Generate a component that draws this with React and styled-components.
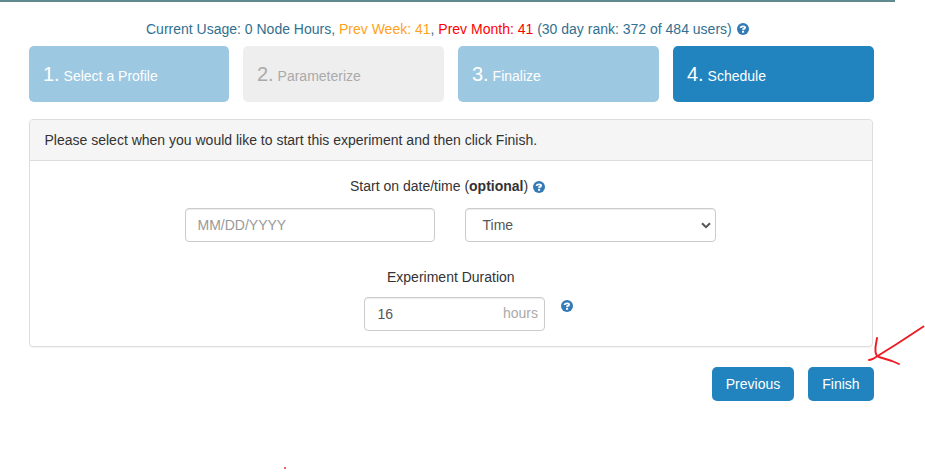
import React from "react";
import styled, { createGlobalStyle } from "styled-components";

const GlobalStyle = createGlobalStyle`
  *, *::before, *::after { box-sizing: border-box; }
  body {
    margin: 0;
    background: #fff;
    color: #333;
    font: 14px/20px "Liberation Sans", Arial, sans-serif;
    overflow: hidden;
  }
`;

const Page = styled.div`
  position: relative;
  width: 925px;
  height: 473px;
`;

const TopRule = styled.div`
  width: 895px;
  height: 2px;
  background: #5f8a8f;
`;

const Content = styled.main`
  width: 845px;
  margin-left: 29px;
  padding-top: 17px;
`;

const Usage = styled.div`
  display: flex;
  align-items: center;
  height: 20px;
  padding-left: 117px;
  white-space: pre;
  color: #31708f;
`;

const Amount = styled.span`
  color: ${(p) => p.$color};
`;

const HelpSvg = styled.svg`
  display: block;
  flex: none;
  width: 12px;
  height: 12px;
  margin: ${(p) => p.$margin || "0"};
`;

const Steps = styled.nav`
  display: grid;
  grid-template-columns: 200px 201px 201px 201px;
  column-gap: 14px;
  margin-top: 7px;
`;

const stepColors = {
  done: ["#9dc8e2", "#fff"],
  disabled: ["#eeeeee", "#aaa"],
  active: ["#2184be", "#fff"],
};

const Step = styled.div`
  height: 56px;
  padding: 14px;
  border-radius: 5px;
  white-space: pre;
  background: ${(p) => stepColors[p.$state][0]};
  color: ${(p) => stepColors[p.$state][1]};
`;

const StepNumber = styled.span`
  font-size: 20px;
  line-height: 28px;
`;

const Panel = styled.section`
  width: 844px;
  height: 228px;
  margin-top: 17px;
  border: 1px solid #ddd;
  border-radius: 4px;
  box-shadow: 0 1px 1px rgba(0, 0, 0, 0.05);
`;

const PanelHeading = styled.header`
  height: 41px;
  padding: 10px 14.5px;
  border-bottom: 1px solid #ddd;
  border-radius: 3px 3px 0 0;
  background: #f5f5f5;
`;

const FieldLabel = styled.div`
  display: flex;
  align-items: center;
  height: 20px;
  margin-top: ${(p) => p.$top}px;
  padding-left: ${(p) => p.$left}px;
  white-space: pre;
`;

const FieldRow = styled.div`
  display: flex;
  gap: ${(p) => p.$gap}px;
  margin-top: ${(p) => p.$top}px;
  padding-left: ${(p) => p.$left}px;
`;

const Control = styled.div`
  display: flex;
  align-items: center;
  justify-content: space-between;
  width: ${(p) => p.$width}px;
  height: 34px;
  padding: ${(p) => p.$padding || "0 12px"};
  border: 1px solid #ccc;
  border-radius: 4px;
  box-shadow: inset 0 1px 1px rgba(0, 0, 0, 0.075);
  color: #555;
`;

const TextInput = styled.input`
  width: 100px;
  height: 20px;
  padding: 0;
  border: 0;
  outline: 0;
  background: transparent;
  color: #555;
  font: inherit;
  &::placeholder { color: #999; opacity: 1; }
`;

const Unit = styled.span`
  margin-bottom: 2px;
  color: #aaa;
`;

const Chevron = styled.svg`
  width: 10px;
  height: 7px;
`;

const Actions = styled.div`
  display: flex;
  justify-content: flex-end;
  gap: 14px;
  margin-top: 20px;
`;

const Button = styled.button`
  width: ${(p) => p.$width}px;
  height: 34px;
  padding: 0;
  border: 0;
  border-radius: 5px;
  background: #2184be;
  color: #fff;
  font: inherit;
`;

const Annotation = styled.svg`
  position: absolute;
  left: 0;
  top: 0;
  width: 925px;
  height: 473px;
  pointer-events: none;
`;

function Help({ margin }) {
  return (
    <HelpSvg $margin={margin} viewBox="0 0 12 12" aria-label="Help">
      <circle cx="6" cy="6" r="6" fill="#337ab7" />
      <path
        d="M3.7 5.1V4.4Q3.9 3.3 6 3.3Q8.1 3.3 8.1 4.7Q8.1 5.7 6.2 6.2V7.3"
        fill="none"
        stroke="#fff"
        strokeWidth="1.8"
      />
      <rect x="5" y="8" width="2.1" height="1.7" fill="#fff" />
    </HelpSvg>
  );
}

const steps = [
  ["1.", "Select a Profile", "done"],
  ["2.", "Parameterize", "disabled"],
  ["3.", "Finalize", "done"],
  ["4.", "Schedule", "active"],
];

export default function App() {
  return (
    <Page>
      <GlobalStyle />
      <TopRule />
      <Content>
        <Usage>
          <span>
            Current Usage: 0 Node Hours, <Amount $color="#ffa31a">Prev Week: 41</Amount>,{" "}
            <Amount $color="#ff0000">Prev Month: 41</Amount> (30 day rank: 372 of 484 users)
          </span>
          <Help margin="0 0 0 5px" />
        </Usage>
        <Steps>
          {steps.map(([number, label, state]) => (
            <Step key={number} $state={state}>
              <StepNumber>{number}</StepNumber> {label}
            </Step>
          ))}
        </Steps>
        <Panel>
          <PanelHeading>
            Please select when you would like to start this experiment and then click Finish.
          </PanelHeading>
          <FieldLabel $top={15} $left={320}>
            <span>Start on date/time (<b>optional</b>)</span>
            <Help margin="2px 0 0 5px" />
          </FieldLabel>
          <FieldRow $top={12} $left={155} $gap={30}>
            <Control $width={250} $padding="0 11.5px">
              <TextInput placeholder="MM/DD/YYYY" aria-label="Date" />
            </Control>
            <Control $width={251} $padding="0 4px 0 16.5px">
              <span>Time</span>
              <Chevron viewBox="0 0 10 7">
                <path d="M1 1.3L5 5.2L9 1.3" fill="none" stroke="#555" strokeWidth="2" />
              </Chevron>
            </Control>
          </FieldRow>
          <FieldLabel $top={25} $left={357}>Experiment Duration</FieldLabel>
          <FieldRow $top={10} $left={334} $gap={16}>
            <Control $width={181} $padding="0 6px 0 12.5px">
              <TextInput defaultValue="16" aria-label="Duration" />
              <Unit>hours</Unit>
            </Control>
            <Help margin="3px 0 0" />
          </FieldRow>
        </Panel>
        <Actions>
          <Button $width={82}>Previous</Button>
          <Button $width={66}>Finish</Button>
        </Actions>
      </Content>
      <Annotation viewBox="0 0 925 473">
        <g fill="none" stroke="#ed1c24" strokeWidth="1.9" strokeLinecap="round" strokeLinejoin="round">
          <path d="M923.5 326.5L909 336L896 344.5L880 354.5L874 358.3Q871 359.8 869 360" />
          <path d="M877 338L875.5 347V352Q876 356 879 357L892 361L899 364" />
        </g>
        <rect x="284" y="467" width="2" height="2" fill="#f0656b" />
      </Annotation>
    </Page>
  );
}
